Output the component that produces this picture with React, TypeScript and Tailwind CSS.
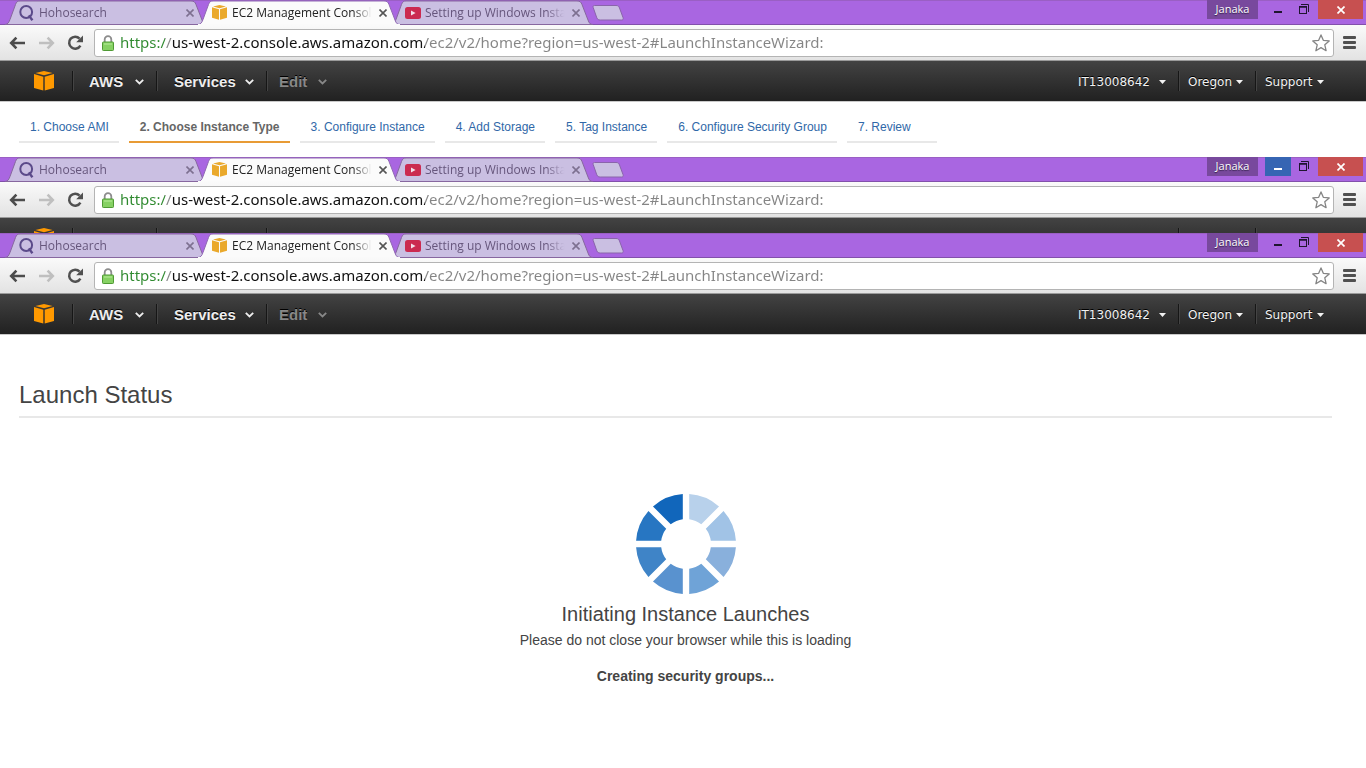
import React from "react";

const CONSOLE_URL =
  "https://us-west-2.console.aws.amazon.com/ec2/v2/home?region=us-west-2#LaunchInstanceWizard:";

function CubeIcon({ className }: { className: string }) {
  return (
    <svg viewBox="0 0 20 20" className={className} fill="currentColor" aria-hidden="true">
      <path d="M10 0 L18.6 1.9 L10 4.3 L1.4 1.9 Z" />
      <path d="M0 3 L9.3 5.7 V19.6 L0 17 Z" />
      <path d="M20 3 L10.7 5.7 V19.6 L20 17 Z" />
    </svg>
  );
}

function SearchIcon() {
  return (
    <svg viewBox="0 0 16 16" className="size-4 shrink-0" fill="none" stroke="#5b4a8a" aria-hidden="true">
      <circle cx="7.2" cy="7" r="5.9" strokeWidth="2" />
      <path d="M9.8 10.4 L13.4 15.2" strokeWidth="2.4" />
    </svg>
  );
}

function VideoIcon() {
  return (
    <svg viewBox="0 0 16 12" className="h-3 w-4 shrink-0" aria-hidden="true">
      <rect width="16" height="12" rx="2.5" fill="#cb2a50" />
      <path d="M6 3.4 L10.6 6 L6 8.6 Z" fill="#f3dfea" />
    </svg>
  );
}

type TabProps = { label: string; icon: React.ReactNode; active?: boolean };

function Tab({ label, icon, active }: TabProps) {
  return (
    <div className={`relative -mr-[9px] h-[25px] w-[202px] shrink-0 ${active ? "z-10" : ""}`}>
      <svg viewBox="0 0 202 25" className="absolute inset-0 h-[25px] w-[202px]" aria-hidden="true">
        <path
          d="M0 24.5 C3 24.5 4 22 5 19.5 L10.5 4.5 C11.5 1.8 12.5 1 15 1 H186 C189 1 190 2 191 4.5 L197 20 C198.2 23.2 199 24.5 202 24.5 Z"
          fill={active ? "#fbfbfb" : "#cabfe2"}
          stroke={active ? "#9068b4" : "#87679f"}
          strokeWidth="1"
        />
        {active && <rect x="0" y="24" width="202" height="1" fill="#fafafa" />}
      </svg>
      <div className="relative flex h-[25px] items-center pr-[11px] pl-[14px]">
        <button
          type="button"
          className={`flex min-w-0 flex-1 items-center gap-1 text-left text-xs ${active ? "text-[#222222]" : "text-[#66567c]"}`}
        >
          <span className="flex w-4 shrink-0">{icon}</span>
          <span className="min-w-0 flex-1 overflow-hidden whitespace-nowrap [mask-image:linear-gradient(to_right,black_86%,transparent_99%)]">
            {label}
          </span>
        </button>
        <button type="button" aria-label={`Close ${label}`} className="ml-1 flex size-3 items-center justify-center">
          <svg
            viewBox="0 0 8 8"
            className="size-2"
            stroke={active ? "#555555" : "#7d7090"}
            strokeWidth="1.6"
            aria-hidden="true"
          >
            <path d="M0.5 0.5 L7.5 7.5 M7.5 0.5 L0.5 7.5" />
          </svg>
        </button>
      </div>
    </div>
  );
}

function WindowControls({ minimizeHot }: { minimizeHot?: boolean }) {
  return (
    <div className="ml-auto flex h-[19px] pr-[3px]">
      <button
        type="button"
        className="w-[51px] bg-[#78499d] pb-[2px] text-[11px] leading-[17px] font-medium text-white [text-shadow:0_1px_1px_#33204a]"
      >
        Janaka
      </button>
      <button
        type="button"
        aria-label="Minimize"
        className={`ml-[7px] flex w-[26px] justify-center pt-[11px] ${minimizeHot ? "bg-[#3665b3] text-white" : "text-[#1f1530]"}`}
      >
        <span className="h-[2px] w-2 bg-current" />
      </button>
      <button type="button" aria-label="Restore" className="flex w-[26px] justify-center pt-1">
        <svg viewBox="0 0 10 10" className="size-[10px]" fill="none" stroke="#1f1530" aria-hidden="true">
          <path d="M2 0.5 H9.5 V8" />
          <rect x="0.5" y="2.5" width="7" height="7" />
          <path d="M0 3 H8" strokeWidth="1.5" />
        </svg>
      </button>
      <button type="button" aria-label="Close window" className="ml-px flex w-[45px] items-center justify-center bg-[#c75050]">
        <svg viewBox="0 0 8 8" className="size-2" stroke="#ffffff" strokeWidth="1.7" aria-hidden="true">
          <path d="M0.5 0.5 L7.5 7.5 M7.5 0.5 L0.5 7.5" />
        </svg>
      </button>
    </div>
  );
}

function TabStrip({ minimizeHot }: { minimizeHot?: boolean }) {
  return (
    <div className="flex h-[25px] border-b border-[#8250ab] bg-[#a966e1] pl-[5px] shadow-[inset_0_1px_0_#9a5fc4]">
      <Tab label="Hohosearch" icon={<SearchIcon />} />
      <Tab label="EC2 Management Console" icon={<CubeIcon className="size-[15px] shrink-0 text-[#eaa92c]" />} active />
      <Tab label="Setting up Windows Instance" icon={<VideoIcon />} />
      <button type="button" aria-label="New tab" className="mt-[5px] ml-[8px] h-4 w-8">
        <svg viewBox="0 0 32 16" className="h-4 w-8" aria-hidden="true">
          <path
            d="M2.5 0.5 H24 C26 0.5 26.8 1 27.5 3 L31 12.5 C31.5 14.3 31 15 29.5 15 H8.5 C6.5 15 5.5 14.5 4.8 12.8 L1.2 2.5 C0.8 1.2 1.2 0.5 2.5 0.5 Z"
            fill="#cabfe2"
            stroke="#8a64ab"
          />
        </svg>
      </button>
      <WindowControls minimizeHot={minimizeHot} />
    </div>
  );
}

function Toolbar() {
  return (
    <div className="flex h-9 items-center border-b border-[#9b9b9b] bg-linear-to-b from-[#fafafa] to-[#e3e3e3] pl-[9px]">
      <button type="button" aria-label="Back">
        <svg viewBox="0 0 16 14" className="h-[14px] w-4" fill="none" stroke="#4c4c4c" strokeWidth="2.6" aria-hidden="true">
          <path d="M16 7 H2.4 M7.4 1.6 L2.2 7 L7.4 12.4" />
        </svg>
      </button>
      <button type="button" aria-label="Forward" className="ml-[14px]">
        <svg viewBox="0 0 16 14" className="h-[14px] w-4" fill="none" stroke="#bfbfbf" strokeWidth="2.6" aria-hidden="true">
          <path d="M0 7 H13.6 M8.6 1.6 L13.8 7 L8.6 12.4" />
        </svg>
      </button>
      <button type="button" aria-label="Reload" className="ml-3">
        <svg viewBox="0 0 16 16" className="size-4" aria-hidden="true">
          <path d="M12.6 3.6 A6 6 0 1 0 13.4 10.6" fill="none" stroke="#505050" strokeWidth="2.5" />
          <path d="M16 0.6 V7.2 H9.2 Z" fill="#505050" />
        </svg>
      </button>
      <div className="ml-[11px] flex h-7 flex-1 items-center rounded-[3px] border border-[#b4b4b4] bg-white pr-[3px] pl-[6px]">
        <svg viewBox="0 0 14 16" className="h-4 w-[14px] shrink-0" aria-hidden="true">
          <path d="M3.7 8 V4.4 A3.3 3.3 0 0 1 10.3 4.4 V8" fill="none" stroke="#8d8d8d" strokeWidth="1.8" />
          <rect x="1.5" y="7" width="11" height="8.5" rx="0.8" fill="#86d163" stroke="#4f9a34" />
          <path d="M3 9 H11" stroke="#b9ec9d" />
        </svg>
        <input
          type="text"
          aria-label="Address"
          defaultValue={CONSOLE_URL}
          className="ml-[5px] h-6 min-w-0 flex-1 bg-[linear-gradient(to_right,#2f8a2f_45px,#858585_45px,#858585_52px,#111111_52px,#111111_305px,#858585_305px)] bg-clip-text pb-[2px] text-[15px] text-transparent outline-none [font-family:'Segoe_UI','Noto_Sans',sans-serif]"
        />
        <button type="button" aria-label="Bookmark this page">
          <svg viewBox="0 0 18 18" className="size-[18px]" fill="#ffffff" stroke="#858585" strokeWidth="1.3" strokeLinejoin="round" aria-hidden="true">
            <path d="M9 0.9 L11.3 6.3 L17.2 6.9 L12.8 10.8 L14.1 16.7 L9 13.6 L3.9 16.7 L5.2 10.8 L0.8 6.9 L6.7 6.3 Z" />
          </svg>
        </button>
      </div>
      <button type="button" aria-label="Menu" className="mr-[10px] ml-[9px] flex w-[13px] flex-col gap-[2px]">
        <span className="h-[3px] rounded-[1px] bg-[#505050]" />
        <span className="h-[3px] rounded-[1px] bg-[#505050]" />
        <span className="h-[3px] rounded-[1px] bg-[#505050]" />
      </button>
    </div>
  );
}

function Divider() {
  return <span className="h-5 w-[2px] border-r border-l border-r-[#444444] border-l-[#161616]" />;
}

function MenuButton({ label, className }: { label: string; className: string }) {
  return (
    <button
      type="button"
      className={`flex items-center justify-between pt-[2px] text-[15px] font-bold [font-family:'Liberation_Sans',Arial,sans-serif] [text-shadow:0_-1px_0_#000] ${className}`}
    >
      {label}
      <svg viewBox="0 0 9 6" className="h-[6px] w-[9px]" fill="none" stroke="currentColor" strokeWidth="1.8" aria-hidden="true">
        <path d="M0.8 0.8 L4.5 4.5 L8.2 0.8" />
      </svg>
    </button>
  );
}

function AccountButton({ label, className }: { label: string; className: string }) {
  return (
    <button
      type="button"
      className={`flex items-center justify-between pt-[2px] text-xs text-[#f2f2f2] [font-family:Verdana,'DejaVu_Sans',sans-serif] [text-shadow:0_-1px_0_#000] ${className}`}
    >
      {label}
      <svg viewBox="0 0 7 4" className="h-1 w-[7px]" fill="currentColor" aria-hidden="true">
        <path d="M0 0 H7 L3.5 4 Z" />
      </svg>
    </button>
  );
}

const NAV_BAR = "flex h-[41px] items-center border-b border-[#c9c9c9] bg-linear-to-b from-[#434343] to-[#212121] pl-[34px]";

function ConsoleNav() {
  return (
    <nav className={NAV_BAR}>
      <a href="#home" aria-label="Console home" className="mr-[18px]">
        <CubeIcon className="size-5 text-[#f90]" />
      </a>
      <Divider />
      <MenuButton label="AWS" className="mr-3 ml-[15px] w-[55px] text-[#eeeeee]" />
      <Divider />
      <MenuButton label="Services" className="mr-3 ml-4 w-[80px] text-[#eeeeee]" />
      <Divider />
      <MenuButton label="Edit" className="ml-[11px] w-[48px] text-[#888888]" />
      <div className="mr-[42px] ml-auto flex items-center">
        <AccountButton label="IT13008642" className="mr-3 w-[88px]" />
        <Divider />
        <AccountButton label="Oregon" className="mr-3 ml-2 w-[55px]" />
        <Divider />
        <AccountButton label="Support" className="ml-2 w-[59px]" />
      </div>
    </nav>
  );
}

/* Top slice of the navigation bar, seen above the window that covers it. */
function CoveredNav() {
  return (
    <div className="h-[15px] overflow-hidden">
      <div className={NAV_BAR}>
        <CubeIcon className="mr-[18px] size-5 text-[#f90]" />
        <div className="flex gap-[82px]">
          <Divider />
          <Divider />
        </div>
        <div className="ml-[108px] flex flex-1">
          <Divider />
        </div>
        <div className="mr-[109px] flex gap-[75px]">
          <Divider />
          <Divider />
        </div>
      </div>
    </div>
  );
}

const STEPS = [
  "1. Choose AMI",
  "2. Choose Instance Type",
  "3. Configure Instance",
  "4. Add Storage",
  "5. Tag Instance",
  "6. Configure Security Group",
  "7. Review",
];

function WizardSteps() {
  return (
    <ol className="flex gap-[10px] bg-white pt-[15px] pb-[14px] pl-[19px] text-xs leading-[21px] [font-family:'Liberation_Sans',Arial,sans-serif]">
      {STEPS.map((step, index) => (
        <li key={step} className="min-w-[90px]">
          <a
            href="#step"
            className={`block border-b-2 pr-[10px] pb-[3px] pl-[11px] ${
              index === 1 ? "border-[#e89b35] font-bold text-[#666666]" : "border-[#e8e8e8] text-[#3068a8]"
            }`}
          >
            {step}
          </a>
        </li>
      ))}
    </ol>
  );
}

const SEGMENT_COLORS = ["#b8d1eb", "#a1c3e6", "#89b0dc", "#6fa3d7", "#5992cf", "#3f84c7", "#2776c2", "#1166bb"];

function segmentPath(index: number) {
  const center = (index + 0.5) * 45;
  const point = (radius: number, side: number) => {
    const spread = 22.5 - (Math.asin(3.2 / radius) * 180) / Math.PI;
    const angle = ((center + side * spread - 90) * Math.PI) / 180;
    return `${(50 + radius * Math.cos(angle)).toFixed(2)} ${(50 + radius * Math.sin(angle)).toFixed(2)}`;
  };
  return `M${point(25, -1)} L${point(50, -1)} A50 50 0 0 1 ${point(50, 1)} L${point(25, 1)} A25 25 0 0 0 ${point(25, -1)} Z`;
}

function LaunchStatus() {
  return (
    <main className="pr-[34px] pl-[19px] text-[#444444] [font-family:'Liberation_Sans',Arial,sans-serif]">
      <h1 className="border-b-2 border-[#e8e8e8] pt-[44px] pb-[5px] text-2xl">Launch Status</h1>
      <section className="flex flex-col items-center pt-[76px] pl-5 text-center text-sm" role="status">
        <svg viewBox="0 0 100 100" className="size-[100px]" aria-hidden="true">
          {SEGMENT_COLORS.map((color, index) => (
            <path key={color} d={segmentPath(index)} fill={color} />
          ))}
        </svg>
        <h2 className="mt-[6px] text-xl">Initiating Instance Launches</h2>
        <p className="mt-[2px]">Please do not close your browser while this is loading</p>
        <p className="mt-4 font-bold">Creating security groups...</p>
      </section>
    </main>
  );
}

export default function App() {
  return (
    <div className="min-h-screen bg-white [font-family:'Segoe_UI','Open_Sans',sans-serif]">
      <section>
        <TabStrip />
        <Toolbar />
        <ConsoleNav />
        <WizardSteps />
      </section>
      <section>
        <TabStrip minimizeHot />
        <Toolbar />
        <CoveredNav />
      </section>
      <section>
        <TabStrip />
        <Toolbar />
        <ConsoleNav />
        <LaunchStatus />
      </section>
    </div>
  );
}
